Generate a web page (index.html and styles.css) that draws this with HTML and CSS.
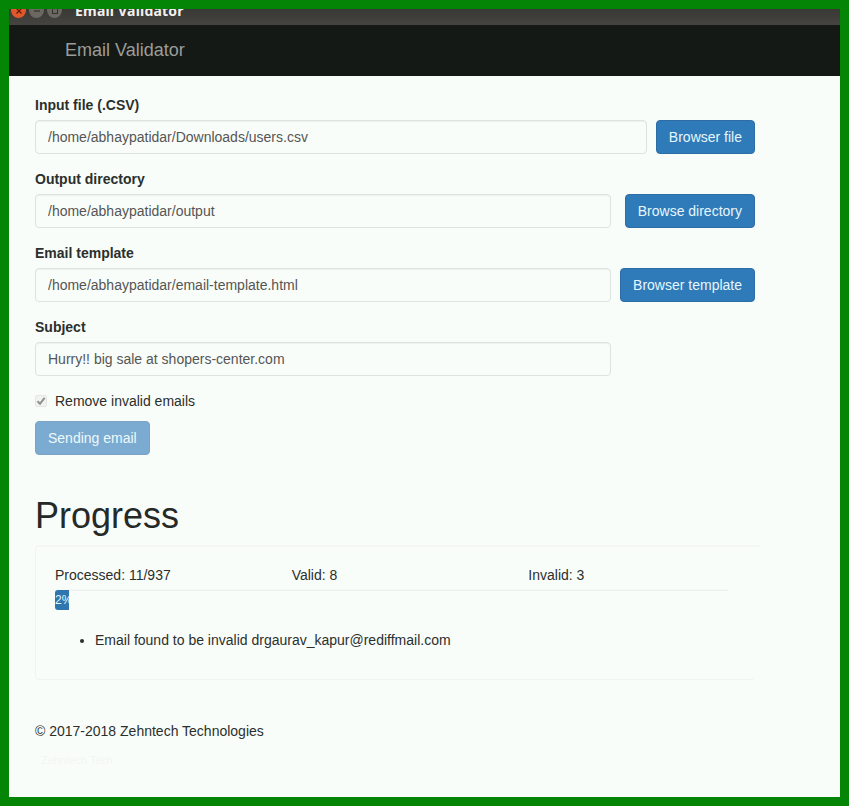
FILE: index.html
```html
<!DOCTYPE html>
<html lang="en">
<head>
<meta charset="utf-8">
<title>Email Validator</title>
<link rel="stylesheet" href="styles.css">
</head>
<body>
<div class="window">
  <div class="titlebar">
    <div class="controls">
      <span class="ctl close"><svg width="8" height="8" viewBox="0 0 8 8"><path d="M1.5 1.5l5 5M6.5 1.5l-5 5" stroke="#5c1a08" stroke-width="1.2"/></svg></span>
      <span class="ctl"><svg width="8" height="8" viewBox="0 0 8 8"><path d="M1 4h6" stroke="#33322e" stroke-width="1.2"/></svg></span>
      <span class="ctl"><svg width="8" height="8" viewBox="0 0 8 8"><rect x="1.5" y="1.5" width="5" height="5" fill="none" stroke="#33322e"/></svg></span>
    </div>
    <span class="wintitle">Email Validator</span>
  </div>
  <nav class="navbar"><span class="brand">Email Validator</span></nav>
  <main class="content">
    <form class="form">
      <div class="group">
        <label class="label">Input file (.CSV)</label>
        <div class="row">
          <input class="input w-file" type="text" value="/home/abhaypatidar/Downloads/users.csv">
          <button class="btn" type="button">Browser file</button>
        </div>
      </div>
      <div class="group">
        <label class="label">Output directory</label>
        <div class="row">
          <input class="input w-dir" type="text" value="/home/abhaypatidar/output">
          <button class="btn" type="button">Browse directory</button>
        </div>
      </div>
      <div class="group">
        <label class="label">Email template</label>
        <div class="row">
          <input class="input w-tpl" type="text" value="/home/abhaypatidar/email-template.html">
          <button class="btn" type="button">Browser template</button>
        </div>
      </div>
      <div class="group">
        <label class="label">Subject</label>
        <div class="row">
          <input class="input w-subject" type="text" value="Hurry!! big sale at shopers-center.com">
        </div>
      </div>
      <div class="check">
        <span class="checkbox"><svg width="12" height="12" viewBox="0 0 12 12"><path d="M2.5 6.2l2.5 2.6L9.6 2.8" fill="none" stroke="#8f928f" stroke-width="2"/></svg></span>
        <span>Remove invalid emails</span>
      </div>
      <button class="btn btn-disabled" type="button">Sending email</button>
    </form>
    <h1 class="heading">Progress</h1>
    <section class="panel">
      <div class="stats">
        <span class="stat">Processed: 11/937</span>
        <span class="stat">Valid: 8</span>
        <span class="stat">Invalid: 3</span>
      </div>
      <div class="track"><div class="bar" style="width:2%">2%</div></div>
      <ul class="log">
        <li>Email found to be invalid drgaurav_kapur@rediffmail.com</li>
      </ul>
    </section>
    <footer class="footer">© 2017-2018 Zehntech Technologies</footer>
    <div class="ghost">Zehntech Tech</div>
  </main>
</div>
</body>
</html>
```
FILE: styles.css
```css
* { box-sizing: border-box; }
html, body { margin: 0; height: 100%; }
body {
  background: #058505;
  padding: 9px;
  font-family: "Liberation Sans", Arial, sans-serif;
  font-size: 14px;
  line-height: 20px;
  color: #2b2f2d;
  overflow: hidden;
}
.window { height: 788px; display: flex; flex-direction: column; background: #f9fdf9; overflow: hidden; }
.titlebar {
  height: 16px;
  flex: none;
  background: linear-gradient(#383835, #464440);
  position: relative;
  overflow: hidden;
}
.controls { position: absolute; left: 2px; top: -6px; display: flex; gap: 3px; }
.ctl {
  width: 15px; height: 15px; border-radius: 50%;
  background: #6a6861;
  display: flex; align-items: center; justify-content: center;
}
.close { background: #e2562a; }
.wintitle {
  position: absolute; left: 66px; top: -8px;
  color: #f2f1ee; font-family: "Noto Sans", sans-serif; font-weight: 700; font-size: 14px; line-height: 20px;
  letter-spacing: .2px;
}
.navbar { height: 51px; flex: none; background: #151915; display: flex; align-items: center; padding: 0 0 2px 56px; }
.brand { font-size: 18px; color: #9a9d9a; line-height: 20px; }
.content { padding: 19px 26px 0; flex: 1; }
.form { width: 720px; }
.group { margin-bottom: 15px; }
.label { display: block; font-weight: 700; margin-bottom: 5px; }
.row { display: flex; justify-content: space-between; align-items: flex-start; }
.input {
  height: 34px; padding: 6px 12px;
  border: 1px solid #dfe3df; border-radius: 4px;
  background: #f9fdf9; color: #555;
  font: 14px/20px "Liberation Sans", Arial, sans-serif;
  box-shadow: inset 0 1px 1px rgba(0,0,0,.05);
}
.w-file { width: 612px; }
.w-dir, .w-tpl, .w-subject { width: 576px; }
.btn {
  height: 34px; padding: 6px 12px;
  border: 1px solid #2e6da4; border-radius: 4px;
  background: #2f7ab9; color: #e6f6fb;
  font: 14px/20px "Liberation Sans", Arial, sans-serif;
  white-space: nowrap;
}
.btn-disabled { opacity: .62; display: block; }
.check { display: flex; align-items: center; height: 20px; margin-bottom: 10px; }
.checkbox {
  width: 12px; height: 12px; margin-right: 8px;
  border: 1px solid #e4e7e4; border-radius: 2px; background: #f1f3f1;
  display: flex; align-items: center; justify-content: center;
  flex: none;
}
.checkbox svg { flex: none; }
.heading { font-size: 36px; font-weight: 500; line-height: 40px; margin: 41px 0 9px; color: #252a28; }
.panel {
  position: relative;
  width: 720px; height: 135px;
  border: 1px solid #f1f4f1; border-right-color: transparent; border-radius: 4px;
  padding: 19px 19px;
}
.panel::before {
  content: ""; position: absolute; top: -1px; left: 2px; right: -6px; height: 2px; background: #f4f7f4;
}
.stats { display: flex; width: 710px; }
.stat { flex: 1 1 0; }
.track { width: 673px; height: 20px; margin-top: 5px; border-top: 1px solid #eef2ef; box-shadow: 0 -1px 0 #f5f8f5; }
.bar {
  height: 20px; margin-top: -1px; min-width: 14px;
  background: #2f75ae; color: #e6f6fb;
  font-size: 12px; line-height: 20px; text-align: center;
  border-radius: 3px 0 0 3px; overflow: hidden; white-space: nowrap;
}
.log { margin: 20px 0 0; padding-left: 40px; }
.footer { margin-top: 41px; }
.ghost { margin-top: 9px; margin-left: 6px; color: #f3f6f3; font-size: 11px; line-height: 20px; }
```
